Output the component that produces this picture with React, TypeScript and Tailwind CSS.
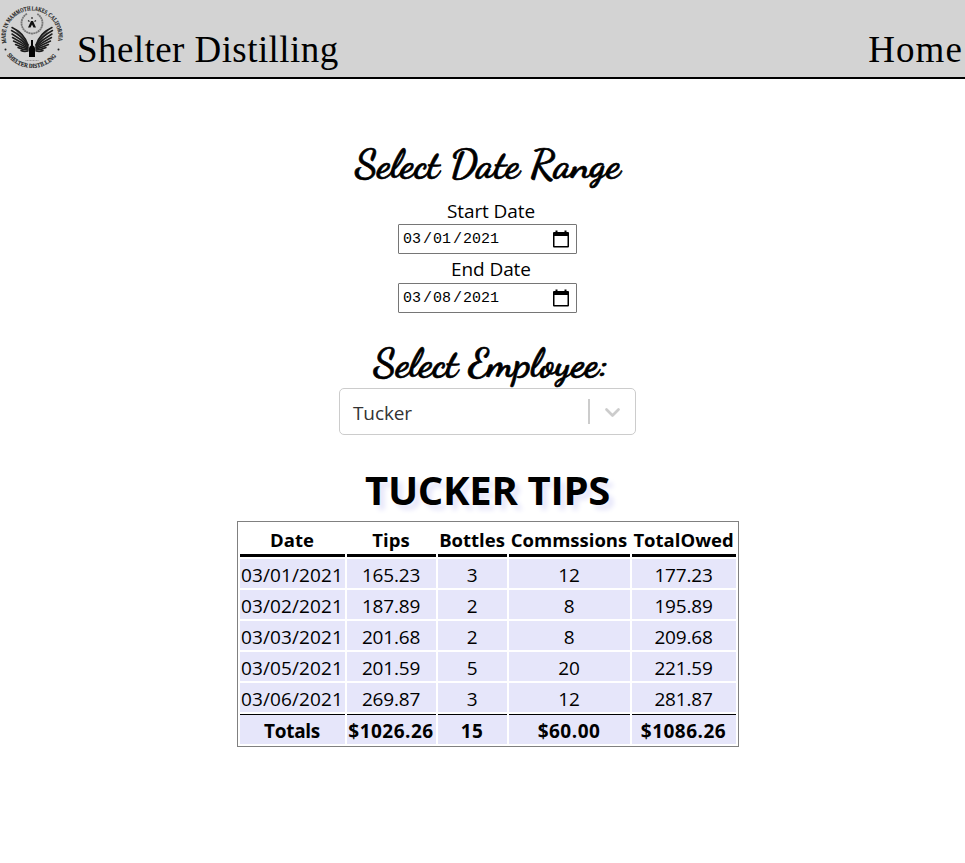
import React from "react";

const sans = "font-['Open_Sans','Noto_Sans',sans-serif]";
const serif = "font-[Georgia,'Liberation_Serif',serif]";
const script = "font-['Dancing_Script','Liberation_Serif',cursive]";

const rows = [
  ["03/01/2021", "165.23", "3", "12", "177.23"],
  ["03/02/2021", "187.89", "2", "8", "195.89"],
  ["03/03/2021", "201.68", "2", "8", "209.68"],
  ["03/05/2021", "201.59", "5", "20", "221.59"],
  ["03/06/2021", "269.87", "3", "12", "281.87"],
];
const heads = ["Date", "Tips", "Bottles", "Commssions", "TotalOwed"];
const totals = ["Totals", "$1026.26", "15", "$60.00", "$1086.26"];
const feathers = [
  "M28 45 Q24 33 12 27.500",
  "M28 45 Q22 36 11.500 30.500",
  "M28 46 Q21 39 12 34",
  "M28 47 Q21 42 12.500 37.500",
  "M28 48 Q22 45 13.500 41",
  "M28 49 Q22 47.500 15.500 44.500",
  "M28 50 Q23 50 18 47.500",
  "M28 51 Q24 52 21 50.500",
];

function Wing() {
  return (
    <g>
      {feathers.map((d) => (
        <path key={d} d={d} fill="none" stroke="#1c1c1c" strokeWidth="1.5" strokeLinecap="round" />
      ))}
      <path d="M14 28.500 Q24 31 28 46 V50 Q22 39 14 28.500Z" fill="#1c1c1c" opacity="0.5" />
    </g>
  );
}

function Logo() {
  return (
    <svg width="65" height="74" viewBox="0 0 65 74" className="block shrink-0">
      <defs>
        <path id="ringTop" d="M6.200 43 A26.500 26.500 0 1 1 57.800 43" />
        <path id="ringBottom" d="M7 55.300 A31 31 0 0 0 57 55.300" />
      </defs>
      <g fill="#222" fontFamily="'Liberation Serif', serif" fontWeight="700" fontSize="6.200" stroke="#222" strokeWidth="0.15">
        <text>
          <textPath href="#ringTop" textLength="93" lengthAdjust="spacingAndGlyphs">MADE IN MAMMOTH LAKES, CALIFORNIA</textPath>
        </text>
        <text>
          <textPath href="#ringBottom" textLength="57" lengthAdjust="spacingAndGlyphs">SHELTER DISTILLING</textPath>
        </text>
      </g>
      <circle cx="5.500" cy="49.500" r="1" fill="#222" />
      <circle cx="58.500" cy="49.500" r="1" fill="#222" />
      <path d="M27 13.800 A10.500 10.500 0 1 0 37 13.800" fill="none" stroke="#777" strokeWidth="1.800" strokeDasharray="2 .4" />
      <path d="M28 27.500 L31 21 H33 L36 27.500 H33.500 L32 24.500 L30.500 27.500Z" fill="#111" />
      <path d="M32 17v2M28 20.500l1.500 1M36 20.500l-1.500 1" stroke="#222" strokeWidth="1.200" />
      <Wing />
      <g transform="translate(64 0) scale(-1 1)">
        <Wing />
      </g>
      <path d="M31 40h2v5.500q2 1 2 3V57h-6v-8.500q0-2 2-3z" fill="#050505" />
      <path d="M25.500 60.500h13" stroke="#888" strokeWidth="0.8" strokeDasharray="1 .5" />
    </svg>
  );
}

function DateField({ month, day, year }: { month: string; day: string; year: string }) {
  return (
    <div className="flex h-[30px] w-[179px] items-center justify-between rounded-[1px] border border-[#767676] bg-white pl-1 pr-[6px]">
      <div className="flex items-center pt-[2px] font-['Liberation_Mono',monospace] text-[15px] leading-5 text-black">
        <span className="w-[20px]">{month}</span>
        <span className="w-[10px]">/</span>
        <span className="w-[20px]">{day}</span>
        <span className="w-[10px]">/</span>
        <span>{year}</span>
      </div>
      <svg width="18" height="18" viewBox="0 0 18 18" className="mb-px block">
        <path
          fillRule="evenodd"
          fill="#000"
          d="M3.500 0.500h2v1.500h7V.5h2V2H16q1 0 1 1v13.500q0 1-1 1H2q-1 0-1-1V3q0-1 1-1h1.500zM2.500 6v10h13V6z"
        />
      </svg>
    </div>
  );
}

export default function App() {
  return (
    <div className={`min-h-[863px] w-full overflow-hidden bg-white text-black ${sans}`}>
      <header className={`flex h-[79px] justify-between border-b-2 border-black bg-[#d3d3d3] ${serif}`}>
        <div className="flex">
          <Logo />
          <span className="ml-3 mt-[29px] whitespace-nowrap text-[37px] leading-[42px] tracking-[0.43px]">Shelter Distilling</span>
        </div>
        <span className="mr-[2px] mt-[29px] text-[37px] leading-[42px] tracking-[1.1px]">Home</span>
      </header>

      <main className="flex flex-col items-center pl-[10px]">
        <h1 className={`mt-[61px] h-[58px] whitespace-nowrap text-[40px] font-bold leading-[49px] [-webkit-text-stroke:0.7px_black] ${script}`}>
          Select Date Range
        </h1>
        <label className="mt-[1px] h-[25px] pl-[7px] text-[19px] leading-[25px] tracking-[-0.1px]">Start Date</label>
        <DateField month="03" day="01" year="2021" />
        <label className="mt-[3px] h-[26px] pl-[7px] text-[19px] leading-[25px] tracking-[-0.1px]">End Date</label>
        <DateField month="03" day="08" year="2021" />
        <h1 className={`mt-[26px] h-[49px] whitespace-nowrap pl-[7px] text-[40px] font-bold leading-[49px] [-webkit-text-stroke:0.7px_black] ${script}`}>
          Select Employee:
        </h1>
        <div className="flex h-[47px] w-[297px] items-center rounded-[5px] border border-[#cccccc] bg-white">
          <span className="flex-1 pl-[13px] pt-[2px] text-[19px] leading-6 tracking-[-0.1px] text-[#333333]">Tucker</span>
          <span className="h-[25px] w-[2px] bg-[#cccccc]" />
          <svg width="45" height="24" viewBox="0 0 45 24" className="block">
            <path d="M16.500 9.500l6 6 6-6" fill="none" stroke="#ccc" strokeWidth="2.700" strokeLinecap="round" strokeLinejoin="round" />
          </svg>
        </div>
        <h1 className="mt-[28px] h-[58px] whitespace-nowrap text-[40px] font-bold leading-[54px] tracking-[-0.3px] [text-shadow:5px_5px_5px_lavender]">TUCKER TIPS</h1>
        <div className="grid w-[502px] grid-cols-[105px_89px_69px_121px_104px] gap-[2px] border border-[#808080] p-[2px] text-center text-[19px]">
          {heads.map((h) => (
            <div key={h} className="h-[33px] whitespace-nowrap border-b-[3px] border-black text-[18.5px] font-bold leading-[32px]">{h}</div>
          ))}
          {rows.map((r) =>
            r.map((c, i) => (
              <div key={r[0] + i} className={`h-[29px] bg-[#e6e6fa] leading-[32px] ${i === 0 ? "tracking-[0.1px]" : "tracking-[-0.2px]"}`}>{c}</div>
            )),
          )}
          {totals.map((t, i) => (
            <div key={t} className={`h-[30px] border-t border-black bg-[#e6e6fa] text-[19px] font-bold leading-[32px] ${i === 0 ? "tracking-[-0.3px]" : "tracking-[0.5px]"}`}>{t}</div>
          ))}
        </div>
      </main>
    </div>
  );
}
